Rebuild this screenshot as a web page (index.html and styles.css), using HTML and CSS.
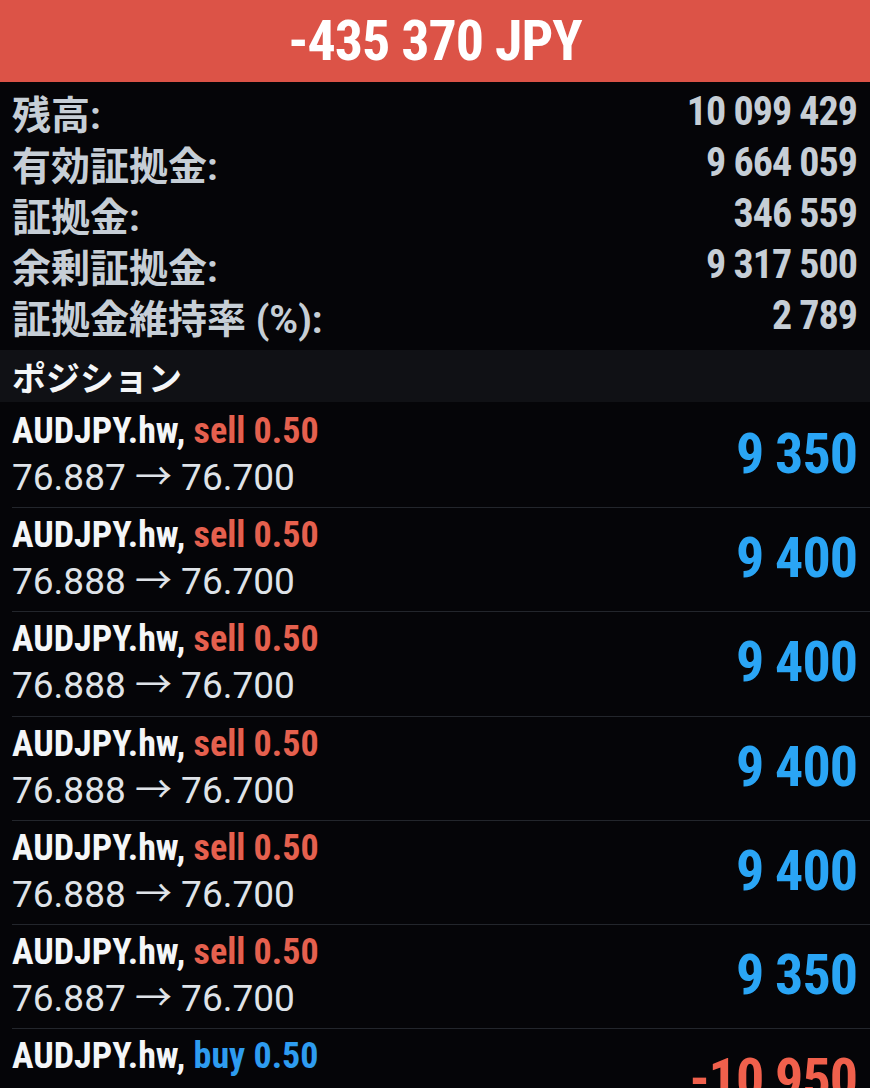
FILE: index.html
```html
<!DOCTYPE html>
<html lang="ja">
<head>
    <meta charset="UTF-8">
    <meta name="viewport" content="width=device-width, initial-scale=1.0">
    <title>取引</title>
    <link rel="stylesheet" href="styles.css">
</head>
<body>
    <div class="cabecera">-435 370 JPY</div>

    <div class="resumen">
        <div class="fila-resumen"><span class="etiqueta">残高:</span><span class="valor">10 099 429</span></div>
        <div class="fila-resumen"><span class="etiqueta">有効証拠金:</span><span class="valor">9 664 059</span></div>
        <div class="fila-resumen"><span class="etiqueta">証拠金:</span><span class="valor">346 559</span></div>
        <div class="fila-resumen"><span class="etiqueta">余剰証拠金:</span><span class="valor">9 317 500</span></div>
        <div class="fila-resumen"><span class="etiqueta">証拠金維持率 (%):</span><span class="valor">2 789</span></div>
    </div>

    <div class="seccion">ポジション</div>

    <div class="posiciones">
        <div class="posicion">
            <div class="datos">
                <div class="titulo">AUDJPY.hw, <span class="venta">sell 0.50</span></div>
                <div class="precios">76.887 → 76.700</div>
            </div>
            <div class="beneficio positivo">9 350</div>
        </div>
        <div class="posicion">
            <div class="datos">
                <div class="titulo">AUDJPY.hw, <span class="venta">sell 0.50</span></div>
                <div class="precios">76.888 → 76.700</div>
            </div>
            <div class="beneficio positivo">9 400</div>
        </div>
        <div class="posicion">
            <div class="datos">
                <div class="titulo">AUDJPY.hw, <span class="venta">sell 0.50</span></div>
                <div class="precios">76.888 → 76.700</div>
            </div>
            <div class="beneficio positivo">9 400</div>
        </div>
        <div class="posicion">
            <div class="datos">
                <div class="titulo">AUDJPY.hw, <span class="venta">sell 0.50</span></div>
                <div class="precios">76.888 → 76.700</div>
            </div>
            <div class="beneficio positivo">9 400</div>
        </div>
        <div class="posicion">
            <div class="datos">
                <div class="titulo">AUDJPY.hw, <span class="venta">sell 0.50</span></div>
                <div class="precios">76.888 → 76.700</div>
            </div>
            <div class="beneficio positivo">9 400</div>
        </div>
        <div class="posicion">
            <div class="datos">
                <div class="titulo">AUDJPY.hw, <span class="venta">sell 0.50</span></div>
                <div class="precios">76.887 → 76.700</div>
            </div>
            <div class="beneficio positivo">9 350</div>
        </div>
        <div class="posicion">
            <div class="datos">
                <div class="titulo">AUDJPY.hw, <span class="compra">buy 0.50</span></div>
                <div class="precios">76.919 → 76.700</div>
            </div>
            <div class="beneficio negativo">-10 950</div>
        </div>
    </div>
</body>
</html>
```

FILE: styles.css
```css
body {
    margin: 0;
    background-color: #050508;
    font-family: Roboto, "Noto Sans CJK JP", sans-serif;
    height: 1088px;
    overflow: hidden;
}
.cabecera {
    height: 82px;
    background-color: #dc5347;
    color: #ffffff;
    font-weight: 700;
    font-size: 56px;
    font-stretch: condensed;
    letter-spacing: -1px;
    display: flex;
    justify-content: center;
    align-items: center;
}
.resumen {
    padding: 4px 13px 9px 12px;
}
.fila-resumen {
    display: flex;
    justify-content: space-between;
    align-items: center;
    height: 51px;
    color: #c6ced6;
}
.etiqueta {
    font-size: 39px;
    font-weight: 700;
}
.valor {
    font-size: 40px;
    font-weight: 700;
    font-stretch: condensed;
    letter-spacing: -1px;
}
.seccion {
    height: 52px;
    background-color: #101115;
    color: #f4f6f8;
    font-size: 34px;
    font-weight: 700;
    padding-left: 12px;
    display: flex;
    align-items: center;
}
.posiciones {
    padding: 2px 0 0 12px;
}
.posicion {
    display: flex;
    justify-content: space-between;
    align-items: center;
    padding: 4px 13px 7.2px 0;
    border-bottom: 1px solid #23262c;
}
.titulo {
    height: 46px;
    line-height: 46px;
    color: #f4f6f8;
    font-size: 36px;
    font-weight: 700;
    font-stretch: condensed;
}
.venta {
    color: #e5604e;
}
.compra {
    color: #2e9cf0;
}
.precios {
    height: 46px;
    line-height: 48px;
    color: #dfe3e8;
    font-size: 37px;
}
.beneficio {
    font-size: 56px;
    font-weight: 700;
    font-stretch: condensed;
    letter-spacing: -1px;
}
.positivo {
    color: #2aa5f5;
}
.negativo {
    color: #f0604c;
}
```
